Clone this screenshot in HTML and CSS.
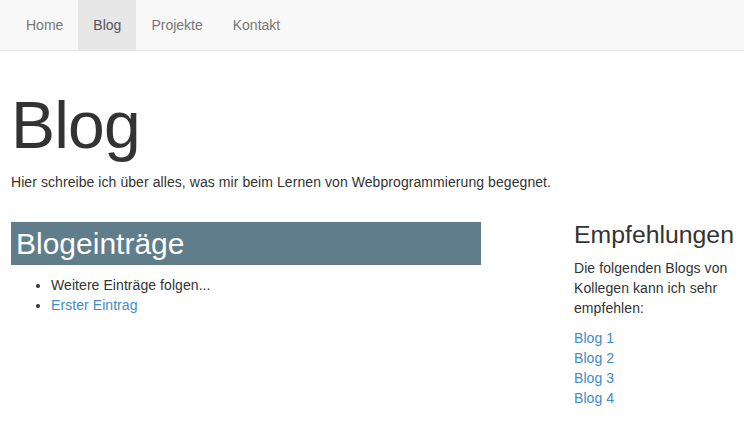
FILE: index.html
```html
<!DOCTYPE html>
<html lang="de">
<head>
<meta charset="utf-8">
<title>Blog</title>
<link rel="stylesheet" href="styles.css">
</head>
<body>
<nav class="navbar">
  <ul class="nav">
    <li><a href="#">Home</a></li>
    <li class="active"><a href="#">Blog</a></li>
    <li><a href="#">Projekte</a></li>
    <li><a href="#">Kontakt</a></li>
  </ul>
</nav>
<div class="page">
  <header class="intro">
    <h1 class="title">Blog</h1>
    <p class="lead">Hier schreibe ich über alles, was mir beim Lernen von Webprogrammierung begegnet.</p>
  </header>
  <div class="columns">
    <main class="main">
      <h2 class="section-title">Blogeinträge</h2>
      <ul class="entries">
        <li>Weitere Einträge folgen...</li>
        <li><a href="#">Erster Eintrag</a></li>
      </ul>
    </main>
    <aside class="side">
      <h3 class="side-title">Empfehlungen</h3>
      <p class="side-text">Die folgenden Blogs von Kollegen kann ich sehr empfehlen:</p>
      <ul class="links">
        <li><a href="#">Blog 1</a></li>
        <li><a href="#">Blog 2</a></li>
        <li><a href="#">Blog 3</a></li>
        <li><a href="#">Blog 4</a></li>
      </ul>
    </aside>
  </div>
</div>
</body>
</html>
```
FILE: styles.css
```css
* { box-sizing: border-box; }
html, body { margin: 0; padding: 0; }
body {
  font-family: "Liberation Sans", Arial, sans-serif;
  font-size: 14px;
  line-height: 20px;
  color: #333;
  background: #fff;
  letter-spacing: 0.07px;
}
a { color: #428bca; text-decoration: none; }

.navbar {
  height: 51px;
  background: #f8f8f8;
  border-bottom: 1px solid #e7e7e7;
  padding: 0 11px;
}
.nav {
  list-style: none;
  margin: 0;
  padding: 0;
  display: flex;
}
.nav a {
  display: block;
  padding: 15px;
  line-height: 20px;
  color: #777;
  letter-spacing: 0;
}
.nav .active a {
  background: #e7e7e7;
  color: #555;
}

.page { padding: 0 11px; }

.intro { padding-top: 38px; }
.title {
  margin: 0;
  font-size: 66px;
  line-height: 1.1;
  font-weight: 400;
  letter-spacing: -0.8px;
}
.lead { margin: 10px 0 0; }

.columns {
  display: grid;
  grid-template-columns: 470px 1fr;
  column-gap: 93px;
  margin-top: 30px;
}
.section-title {
  margin: 0;
  background: #607d8b;
  color: #fff;
  font-size: 30px;
  font-weight: 400;
  line-height: 35px;
  padding: 4px 5px;
  letter-spacing: 0;
}
.entries {
  margin: 10px 0 0;
  padding-left: 40px;
}

.side-title {
  margin: 0;
  font-size: 24.8px;
  font-weight: 400;
  line-height: 26px;
  letter-spacing: 0;
}
.side-text { margin: 10px 0 10px; }
.links { list-style: none; margin: 0; padding: 0; }
```
